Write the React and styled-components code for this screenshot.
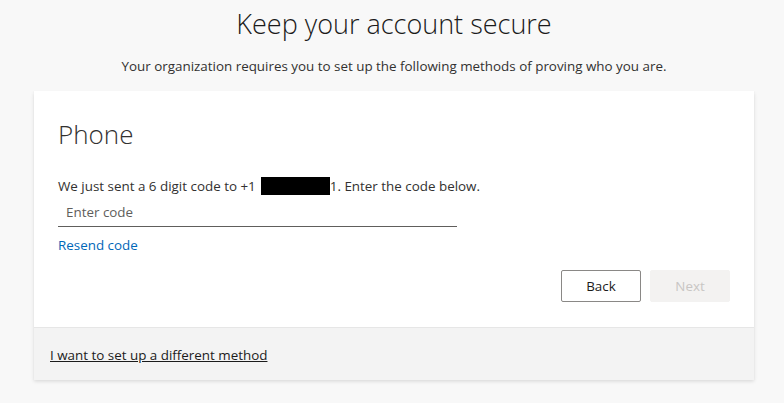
import React from "react";
import styled, { createGlobalStyle } from "styled-components";

const Global = createGlobalStyle`
  html, body { margin: 0; padding: 0; background: #f8f8f8; }
  body { font-family: "Open Sans", "Noto Sans", sans-serif; color: #323130; }
`;

const Page = styled.div`
  width: 784px;
  height: 403px;
  box-sizing: border-box;
  padding-left: 4px;
  display: flex;
  flex-direction: column;
  align-items: center;
  overflow: hidden;
`;

const Title = styled.h1`
  margin: 4px 0 0;
  font-size: 27px;
  font-weight: 300;
  line-height: 40px;
  color: #1b1b1b;
`;

const Subtitle = styled.p`
  margin: 12px 0 0;
  font-size: 13.4px;
  line-height: 20px;
  color: #323130;
`;

const Card = styled.div`
  margin-top: 15px;
  width: 720px;
  background: #fff;
  box-shadow: 0 1.6px 3.6px rgba(0,0,0,0.13), 0 0.3px 0.9px rgba(0,0,0,0.11);
  display: flex;
  flex-direction: column;
`;

const Body = styled.div`
  padding: 26px 24px 25px;
  display: flex;
  flex-direction: column;
`;

const Heading = styled.h2`
  margin: 0;
  font-size: 26px;
  font-weight: 300;
  line-height: 34px;
  color: #323130;
`;

const Text = styled.p`
  margin: 25px 0 0;
  font-size: 13.4px;
  line-height: 20px;
  display: flex;
  align-items: center;
`;

const Redact = styled.span`
  display: inline-block;
  width: 69px;
  height: 18px;
  background: #000;
  margin-left: 5px;
`;

const Input = styled.input`
  margin-top: 3px;
  width: 399px;
  box-sizing: border-box;
  border: none;
  border-bottom: 1px solid #605e5c;
  padding: 3px 8px 4px;
  font: inherit;
  font-size: 13.4px;
  line-height: 20px;
  background: transparent;
  outline: none;
  &::placeholder { color: #605e5c; }
`;

const Link = styled.a`
  margin-top: 8px;
  font-size: 13.4px;
  line-height: 20px;
  color: #0067b8;
  text-decoration: none;
  align-self: flex-start;
`;

const Actions = styled.div`
  margin-top: 15px;
  display: flex;
  justify-content: flex-end;
  gap: 9px;
`;

const Button = styled.button`
  width: 80px;
  height: 32px;
  box-sizing: border-box;
  border-radius: 2px;
  font: inherit;
  font-size: 13.4px;
  font-weight: 500;
  border: 1px solid ${p => (p.$disabled ? "#f3f2f1" : "#8a8886")};
  background: ${p => (p.$disabled ? "#f3f2f1" : "#fff")};
  color: ${p => (p.$disabled ? "#c8c6c4" : "#1b1b1b")};
`;

const Footer = styled.div`
  background: #f3f3f3;
  border-top: 1px solid #e6e6e6;
  padding: 15px 16px;
`;

const FooterLink = styled.a`
  font-size: 13.4px;
  line-height: 20px;
  color: #1b1b1b;
  text-decoration: underline;
`;

export default function App() {
  return (
    <Page>
      <Global />
      <Title>Keep your account secure</Title>
      <Subtitle>Your organization requires you to set up the following methods of proving who you are.</Subtitle>
      <Card>
        <Body>
          <Heading>Phone</Heading>
          <Text>
            We just sent a 6 digit code to +1<Redact />1. Enter the code below.
          </Text>
          <Input placeholder="Enter code" />
          <Link href="#">Resend code</Link>
          <Actions>
            <Button>Back</Button>
            <Button $disabled>Next</Button>
          </Actions>
        </Body>
        <Footer>
          <FooterLink href="#">I want to set up a different method</FooterLink>
        </Footer>
      </Card>
    </Page>
  );
}
